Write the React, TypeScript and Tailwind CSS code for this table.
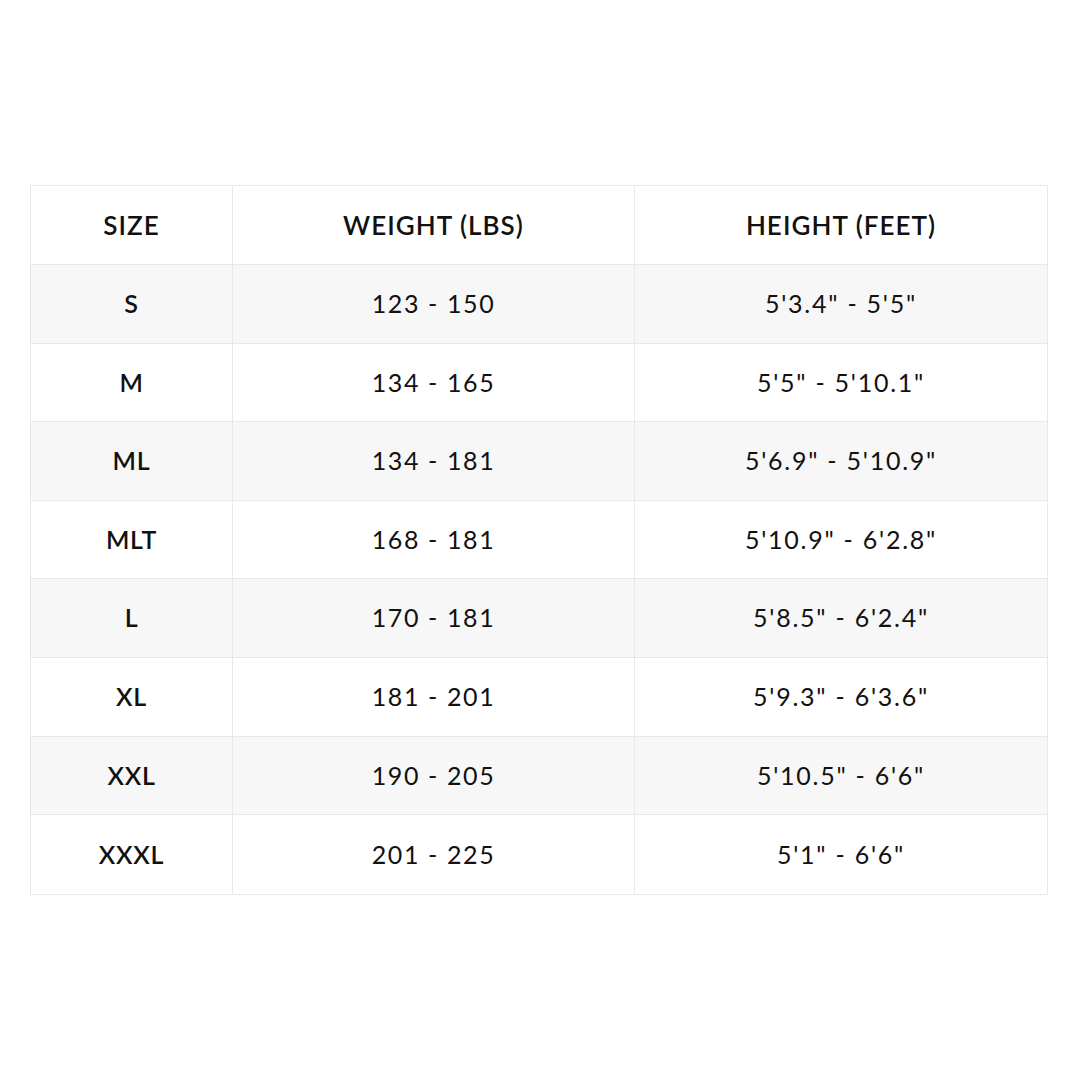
const rows = [
  ['S', '123 - 150', `5'3.4" - 5'5"`],
  ['M', '134 - 165', `5'5" - 5'10.1"`],
  ['ML', '134 - 181', `5'6.9" - 5'10.9"`],
  ['MLT', '168 - 181', `5'10.9" - 6'2.8"`],
  ['L', '170 - 181', `5'8.5" - 6'2.4"`],
  ['XL', '181 - 201', `5'9.3" - 6'3.6"`],
  ['XXL', '190 - 205', `5'10.5" - 6'6"`],
  ['XXXL', '201 - 225', `5'1" - 6'6"`],
]

export default function App() {
  return (
    <div className="w-[1080px] h-[1080px] bg-white pt-[185px] pl-[30px] font-['Lato',sans-serif] text-[#111]">
      <div className="w-[1018px] border border-[#e8e8e8]">
        {/* header */}
        <div className="grid grid-cols-[202px_402px_1fr] h-[79px] border-b border-[#e8e8e8] text-[26px] font-semibold tracking-[0.04em]">
          <div className="flex items-center justify-center border-r border-[#e8e8e8]">SIZE</div>
          <div className="flex items-center justify-center border-r border-[#e8e8e8]">WEIGHT (LBS)</div>
          <div className="flex items-center justify-center">HEIGHT (FEET)</div>
        </div>
        {rows.map((r, i) => (
          <div
            key={r[0]}
            className={`grid grid-cols-[202px_402px_1fr] h-[78.6px] text-[25px] ${
              i < rows.length - 1 ? 'border-b border-[#e8e8e8]' : ''
            } ${i % 2 === 0 ? 'bg-[#f7f7f7]' : 'bg-white'}`}
          >
            <div className="flex items-center justify-center border-r border-[#e8e8e8] font-semibold tracking-[0.03em]">{r[0]}</div>
            <div className="flex items-center justify-center border-r border-[#e8e8e8] tracking-[0.065em]">{r[1]}</div>
            <div className="flex items-center justify-center tracking-[0.07em]">{r[2]}</div>
          </div>
        ))}
      </div>
    </div>
  )
}
